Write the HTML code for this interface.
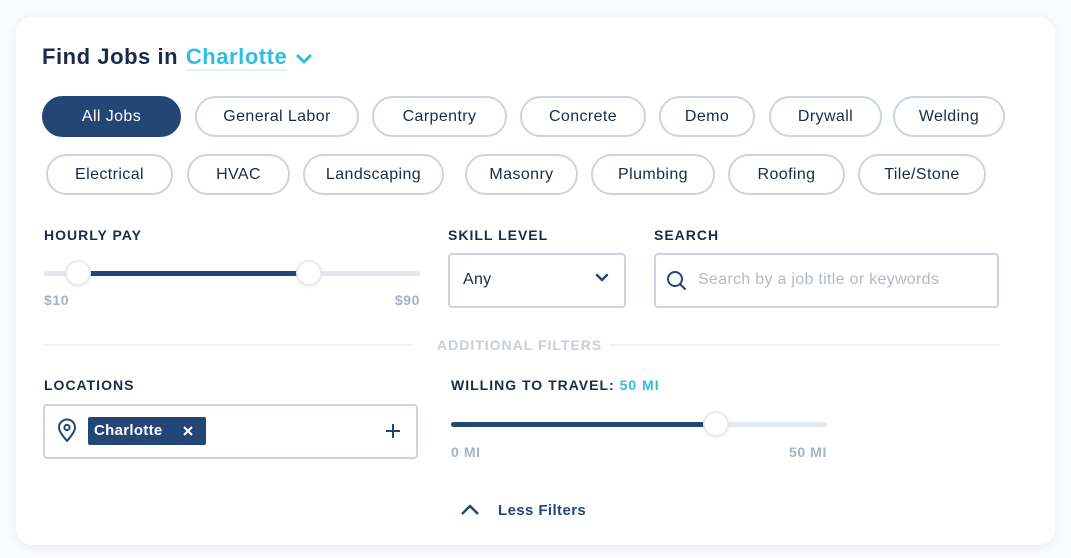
<!DOCTYPE html>
<html><head><style>
*{margin:0;padding:0;box-sizing:border-box}
body{width:1071px;height:558px;background:#fafbfc;font-family:"Liberation Sans",sans-serif;color:#1c2a4a;position:relative;overflow:hidden}
.card{position:absolute;left:16px;top:17px;width:1039px;height:528px;background:#fff;border-radius:16px;box-shadow:0 2px 10px rgba(30,40,70,.08)}
.a{position:absolute}
.pill{position:absolute;height:41px;border:2px solid #ccd4e1;border-radius:21px;font-size:16px;letter-spacing:.4px;display:flex;align-items:center;justify-content:center;color:#1c2a4a;background:#fff}
.pill.on{background:#244677;border-color:#244677;color:#fff}
.lbl{position:absolute;font-size:14px;font-weight:bold;letter-spacing:1px;color:#1c2a4a}
.track{position:absolute;height:5px;background:#e3e8ef;border-radius:3px}
.fill{position:absolute;height:5px;background:#244677}
.h{position:absolute;width:26px;height:26px;border-radius:50%;background:#fff;border:2px solid #e8ebf1;box-shadow:0 1px 3px rgba(0,0,0,.08)}
.sm{position:absolute;font-size:14px;font-weight:bold;color:#a7b1c3;letter-spacing:.6px}
.box{position:absolute;border:2px solid #ccd4e1;border-radius:4px;background:#fff}
</style></head><body>
<div class="card"></div>
<div class="a" style="left:42px;top:44px;font-size:22px;font-weight:bold;letter-spacing:.55px;color:#1c2a4a">Find Jobs in <span style="color:#2fbde0;border-bottom:2px solid #dff3fa;margin-left:1px">Charlotte</span></div>
<svg class="a" style="left:295px;top:52px" width="18" height="14" viewBox="0 0 18 14"><path d="M3 4l6 6 6-6" stroke="#2fbde0" stroke-width="3" fill="none" stroke-linecap="round" stroke-linejoin="round"/></svg>

<div class="pill on" style="left:42px;top:96px;width:139px">All Jobs</div>
<div class="pill" style="left:195px;top:96px;width:164px">General Labor</div>
<div class="pill" style="left:372px;top:96px;width:135px">Carpentry</div>
<div class="pill" style="left:520px;top:96px;width:126px">Concrete</div>
<div class="pill" style="left:659px;top:96px;width:96px">Demo</div>
<div class="pill" style="left:769px;top:96px;width:113px">Drywall</div>
<div class="pill" style="left:893px;top:96px;width:112px">Welding</div>

<div class="pill" style="left:46px;top:154px;width:127px">Electrical</div>
<div class="pill" style="left:187px;top:154px;width:103px">HVAC</div>
<div class="pill" style="left:303px;top:154px;width:141px">Landscaping</div>
<div class="pill" style="left:465px;top:154px;width:113px">Masonry</div>
<div class="pill" style="left:591px;top:154px;width:124px">Plumbing</div>
<div class="pill" style="left:728px;top:154px;width:117px">Roofing</div>
<div class="pill" style="left:858px;top:154px;width:128px">Tile/Stone</div>

<div class="lbl" style="left:44px;top:227px">HOURLY PAY</div>
<div class="track" style="left:44px;top:271px;width:376px"></div>
<div class="fill" style="left:78px;top:271px;width:231px"></div>
<div class="h" style="left:65px;top:260px"></div>
<div class="h" style="left:296px;top:260px"></div>
<div class="sm" style="left:44px;top:292px">$10</div>
<div class="sm" style="left:320px;width:100px;text-align:right;top:292px">$90</div>

<div class="lbl" style="left:448px;top:227px">SKILL LEVEL</div>
<div class="box" style="left:448px;top:253px;width:178px;height:55px"></div>
<div class="a" style="left:463px;top:271px;font-size:16px;letter-spacing:.3px">Any</div>
<svg class="a" style="left:594px;top:272px" width="16" height="12" viewBox="0 0 16 12"><path d="M3 3l5 5 5-5" stroke="#244677" stroke-width="2.5" fill="none" stroke-linecap="round" stroke-linejoin="round"/></svg>

<div class="lbl" style="left:654px;top:227px">SEARCH</div>
<div class="box" style="left:654px;top:253px;width:345px;height:55px"></div>
<svg class="a" style="left:666px;top:270px" width="22" height="22" viewBox="0 0 22 22"><circle cx="9" cy="9" r="7" stroke="#244677" stroke-width="2" fill="none"/><path d="M14 14l5 5" stroke="#244677" stroke-width="2" stroke-linecap="round"/></svg>
<div class="a" style="left:698px;top:271px;font-size:16px;letter-spacing:.3px;color:#b3b9c2">Search by a job title or keywords</div>

<div class="a" style="left:43px;top:344px;width:370px;height:2px;background:#eef1f5"></div>
<div class="a" style="left:610px;top:344px;width:390px;height:2px;background:#eef1f5"></div>
<div class="a" style="left:437px;top:337px;font-size:14px;font-weight:bold;letter-spacing:1px;color:#c8cdd7">ADDITIONAL FILTERS</div>

<div class="lbl" style="left:44px;top:377px">LOCATIONS</div>
<div class="box" style="left:43px;top:404px;width:375px;height:55px"></div>
<svg class="a" style="left:56px;top:418px" width="22" height="26" viewBox="0 0 22 26"><path d="M11 23C6 17 3 13 3 9.5a8 8 0 0 1 16 0C19 13 16 17 11 23z" stroke="#244677" stroke-width="2" fill="none" stroke-linejoin="round"/><circle cx="11" cy="9.5" r="2.6" stroke="#244677" stroke-width="2" fill="none"/></svg>
<div class="a" style="left:88px;top:417px;width:118px;height:28px;background:#244677;border-radius:2px;color:#fff;font-size:15px;font-weight:bold;letter-spacing:.3px;padding:5px 0 0 6px">Charlotte</div>
<svg class="a" style="left:182px;top:425px" width="12" height="12" viewBox="0 0 12 12"><path d="M2 2l8 8M10 2l-8 8" stroke="#fff" stroke-width="2"/></svg>
<svg class="a" style="left:384px;top:422px" width="18" height="18" viewBox="0 0 18 18"><path d="M9 2v14M2 9h14" stroke="#244677" stroke-width="2"/></svg>

<div class="lbl" style="left:451px;top:377px">WILLING TO TRAVEL: <span style="color:#2fbde0">50 MI</span></div>
<div class="track" style="left:451px;top:422px;width:376px"></div>
<div class="fill" style="left:451px;top:422px;width:265px;border-radius:3px 0 0 3px"></div>
<div class="h" style="left:703px;top:411px"></div>
<div class="sm" style="left:451px;top:444px">0 MI</div>
<div class="sm" style="left:727px;width:100px;text-align:right;top:444px">50 MI</div>

<svg class="a" style="left:459px;top:503px" width="22" height="14" viewBox="0 0 22 14"><path d="M3 11l8-8 8 8" stroke="#244677" stroke-width="2.5" fill="none" stroke-linejoin="round"/></svg>
<div class="a" style="left:498px;top:502px;font-size:15px;font-weight:bold;letter-spacing:.4px;color:#244677">Less Filters</div>
</body></html>
